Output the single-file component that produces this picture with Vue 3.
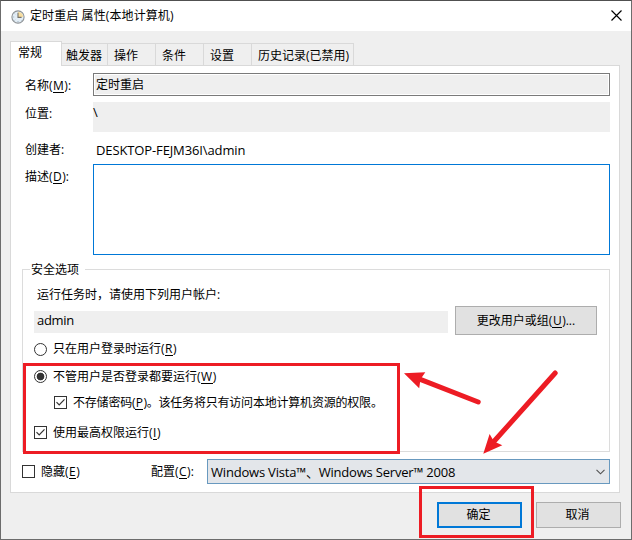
<script setup>
const tabs = [
  { label: '触发器', width: 46 },
  { label: '操作', width: 48 },
  { label: '条件', width: 48 },
  { label: '设置', width: 48 },
  { label: '历史记录(已禁用)', width: 102 },
]
</script>

<template>
  <div class="window">
    <header class="titlebar">
      <svg class="clock" width="14" height="14" viewBox="0 0 14 14">
        <circle cx="7" cy="7" r="6.1" fill="#e3edf5" stroke="#8d9296" stroke-width="1.1" />
        <path d="M7 7V1.8a5.2 5.2 0 0 1 5.2 5.2z" fill="#f7dda0" />
        <path d="M7 2.8V7.4H10.6" fill="none" stroke="#77736a" stroke-width="1.1" />
        <path d="M2.2 7h1M7 11v1M3.6 10.4l.6-.6M10 10l.5.5M3.6 3.6l.6.6" stroke="#8da6b8" stroke-width=".8" />
      </svg>
      <span class="title">定时重启 属性(本地计算机)</span>
      <svg class="close" width="11" height="11" viewBox="0 0 11 11">
        <path d="M.5.5l10 10M10.5.5l-10 10" stroke="#000" stroke-width="1.15" />
      </svg>
    </header>

    <nav class="tabs">
      <div class="tab active">常规</div>
      <div v-for="t in tabs" :key="t.label" class="tab" :style="{ width: t.width + 'px' }">{{ t.label }}</div>
    </nav>

    <main class="page">
      <div class="row name">
        <span class="label">名称(<u>M</u>):</span>
        <div class="input"><span>定时重启</span></div>
      </div>
      <div class="row location">
        <span class="label">位置:</span>
        <div class="readonly">\</div>
      </div>
      <div class="row creator">
        <span class="label">创建者:</span>
        <span class="value">DESKTOP-FEJM36I\admin</span>
      </div>
      <div class="row description">
        <span class="label">描述(<u>D</u>):</span>
        <div class="textarea"></div>
      </div>

      <section class="group">
        <span class="legend">安全选项</span>
        <p class="hint">运行任务时，请使用下列用户帐户:</p>
        <div class="account">
          <div class="user">admin</div>
          <div class="button change"><span>更改用户或组(<u>U</u>)...</span></div>
        </div>
        <div class="option first">
          <i class="radio"></i><span>只在用户登录时运行(<u>R</u>)</span>
        </div>
        <div class="option second">
          <i class="radio on"></i><span>不管用户是否登录都要运行(<u>W</u>)</span>
        </div>
        <div class="option nested">
          <i class="check"><svg width="11" height="11" viewBox="0 0 11 11"><path d="M1.5 5.2l2.7 2.8 5.3-5.6" /></svg></i>
          <span>不存储密码(<u>P</u>)。该任务将只有访问本地计算机资源的权限。</span>
        </div>
        <div class="option highest">
          <i class="check"><svg width="11" height="11" viewBox="0 0 11 11"><path d="M1.5 5.2l2.7 2.8 5.3-5.6" /></svg></i>
          <span>使用最高权限运行(<u>I</u>)</span>
        </div>
      </section>

      <div class="config">
        <i class="check"></i>
        <span class="hidden-label">隐藏(<u>E</u>)</span>
        <span class="config-label">配置(<u>C</u>):</span>
        <div class="select">
          <span>Windows Vista™、Windows Server™ 2008</span>
          <svg width="9" height="6" viewBox="0 0 9 6"><path d="M.5.8l4 4 4-4" fill="none" stroke="#505050" stroke-width="1.1" /></svg>
        </div>
      </div>
    </main>

    <footer class="actions">
      <div class="button primary">确定</div>
      <div class="button cancel">取消</div>
    </footer>

    <div class="mark options-mark"></div>
    <div class="mark ok-mark"></div>
    <svg class="arrows" width="632" height="540" viewBox="0 0 632 540">
      <g stroke="#ed1c24" stroke-width="5" stroke-linecap="round">
        <path d="M419 378.8L478.2 402" />
        <path d="M493 442.5L555.2 373" />
      </g>
      <g fill="#ed1c24">
        <path d="M404 373.2L425.3 372.2L420.5 379.3L419.2 388.2Z" />
        <path d="M483.3 453.8L489.6 434L494 441.5L502.3 445.3Z" />
      </g>
    </svg>
  </div>
</template>

<style>
body {
  margin: 0;
  overflow: hidden;
}
</style>

<style scoped>
* {
  box-sizing: border-box;
}
.window {
  position: relative;
  width: 632px;
  height: 540px;
  border: 1px solid #6c6c6c;
  border-top-color: #505050;
  background: #efefef;
  font: 12px/16px 'Open Sans', 'Noto Sans CJK SC', sans-serif;
  color: #000;
  white-space: nowrap;
}
u {
  text-decoration: none;
  box-shadow: inset 0 -1px #000;
  display: inline-block;
  height: 15px;
  padding: 0 0.5px;
  line-height: 16px;
  vertical-align: top;
}
.titlebar {
  height: 30px;
  background: #fff;
  display: flex;
  align-items: center;
  padding: 0 9px 0 10px;
}
.clock {
  margin-top: 1px;
}
.title {
  margin-left: 5px;
  letter-spacing: 0.1px;
}
.close {
  margin-left: auto;
  margin-top: -1px;
}
.tabs {
  display: flex;
  align-items: flex-end;
  height: 35px;
  padding-left: 9px;
}
.tab {
  height: 23px;
  border: 1px solid #d9d9d9;
  border-left: 0;
  padding: 4px 0 0 4px;
}
.tab + .tab + .tab {
  padding-left: 6px;
}
.tab.active {
  width: 52px;
  height: 25px;
  border-left: 1px solid #d9d9d9;
  border-bottom: 0;
  background: #fff;
  padding: 3px 0 0 7px;
  position: relative;
}
.page {
  width: 610px;
  height: 428px;
  margin-left: 9px;
  margin-top: -1px;
  border: 1px solid #d9d9d9;
  background: #fff;
  padding: 7px 9px 0 11px;
}
.row {
  display: flex;
}
.label {
  width: 71px;
  padding-left: 3px;
}
.input {
  width: 517px;
  height: 23px;
  border: 1px solid #7a7a7a;
  padding: 1px;
}
.input span {
  display: block;
  height: 19px;
  background: #efefef;
  padding: 2px 0 0 1px;
}
.name .label {
  padding-top: 5px;
}
.location {
  margin-top: 6px;
}
.location .label {
  padding-top: 4px;
}
.readonly {
  width: 517px;
  height: 30px;
  background: #efefef;
  padding-top: 2px;
  font-size: 13px;
}
.creator {
  margin-top: 10px;
}
.value {
  padding-left: 3px;
  font-size: 13px;
  letter-spacing: -0.12px;
}
.description {
  margin-top: 6px;
}
.description .label {
  padding-top: 5px;
}
.textarea {
  width: 517px;
  height: 91px;
  border: 1px solid #0078d7;
}
.group {
  height: 183px;
  width: 588px;
  margin-top: 14px;
  border: 1px solid #dcdcdc;
  padding-left: 11px;
}
.legend {
  display: block;
  width: 55px;
  height: 16px;
  margin: -8px 0 0 -4px;
  padding-left: 1px;
  background: #fff;
}
.hint {
  margin: 9px 0 0 3px;
}
.account {
  display: flex;
  margin-top: 3px;
}
.user {
  width: 414px;
  height: 22px;
  margin-top: 5px;
  padding: 1px 3px;
  background: #efefef;
  font-size: 13px;
  letter-spacing: -0.3px;
}
.button {
  display: flex;
  align-items: center;
  justify-content: center;
  background: #e1e1e1;
  border: 1px solid #adadad;
}
.change {
  width: 142px;
  height: 29px;
  margin-left: 7px;
}
.option {
  display: flex;
  align-items: center;
  height: 16px;
}
.option span {
  margin-left: 6px;
}
.first {
  margin-top: 6px;
}
.second {
  margin-top: 12px;
}
.second .radio {
  margin-top: -1px;
}
.nested {
  margin: 10px 0 0 20px;
}
.nested .check,
.highest .check {
  margin-top: -1px;
}
.nested span {
  letter-spacing: -0.2px;
}
.highest {
  margin-top: 14px;
}
.radio,
.check {
  flex: none;
  width: 13px;
  height: 13px;
  border: 1px solid #333;
  background: #fff;
}
.radio {
  border-radius: 50%;
}
.radio.on {
  background: radial-gradient(circle, #333 3.5px, #fff 4.2px);
}
.check svg {
  display: block;
}
.check path {
  fill: none;
  stroke: #333;
  stroke-width: 1.2;
}
.config {
  display: flex;
  align-items: center;
  margin-top: 7px;
}
.hidden-label {
  width: 110px;
  margin-left: 6px;
}
.config-label {
  width: 56px;
}
.select {
  display: flex;
  align-items: center;
  justify-content: space-between;
  width: 403px;
  height: 25px;
  border: 1px solid #6899bf;
  background: #e3e6ea;
  padding: 0 4px 0 3px;
  font-size: 13px;
  letter-spacing: -0.2px;
}
.actions {
  display: flex;
  gap: 14px;
  margin: 9px 0 0 436px;
}
.actions .button {
  width: 85px;
  height: 26px;
  padding-right: 2px;
}
.actions .primary {
  border: 2px solid #0078d7;
}
.mark {
  position: absolute;
  border: 3px solid #ed1c24;
}
.options-mark {
  left: 22px;
  top: 362px;
  width: 377px;
  height: 91px;
}
.ok-mark {
  left: 418px;
  top: 485px;
  width: 115px;
  height: 52px;
}
.arrows {
  position: absolute;
  left: -1px;
  top: -1px;
}
</style>
